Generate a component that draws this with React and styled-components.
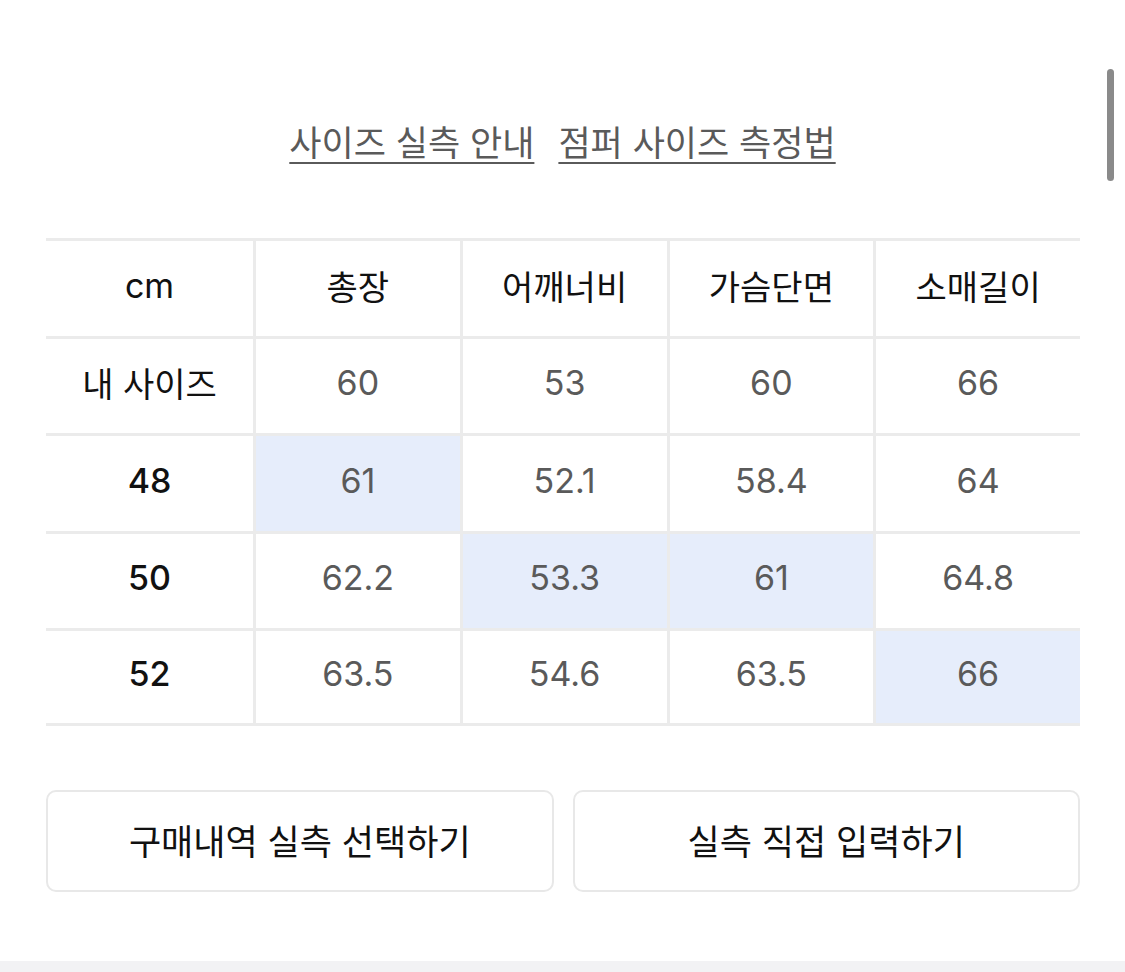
import React from 'react';
import styled, { createGlobalStyle } from 'styled-components';

const GlobalStyle = createGlobalStyle`
    html, body {
        margin: 0;
        padding: 0;
        background: #ffffff;
        font-family: Inter, "Noto Sans CJK KR", sans-serif;
    }
`;

const columns = ['총장', '어깨너비', '가슴단면', '소매길이'];

const rows = [
    { label: '내 사이즈', values: ['60', '53', '60', '66'] },
    { label: '48', values: ['61', '52.1', '58.4', '64'], marked: [0] },
    { label: '50', values: ['62.2', '53.3', '61', '64.8'], marked: [1, 2] },
    { label: '52', values: ['63.5', '54.6', '63.5', '66'], marked: [3] },
];

const App = () => {
    return (
        <Page>
            <GlobalStyle />
            <Links>
                <GuideLink>사이즈 실측 안내</GuideLink>
                <GuideLink>점퍼 사이즈 측정법</GuideLink>
            </Links>
            <Table>
                <Cell first>cm</Cell>
                {columns.map((c) => (
                    <Cell key={c}>{c}</Cell>
                ))}
                {rows.map((row, ri) => (
                    <React.Fragment key={row.label}>
                        <Cell
                            first
                            numeric={!isNaN(row.label)}
                            last={ri === rows.length - 1}
                        >
                            {row.label}
                        </Cell>
                        {row.values.map((v, i) => (
                            <Cell
                                key={i}
                                value
                                last={ri === rows.length - 1}
                                marked={row.marked && row.marked.includes(i)}
                            >
                                {v}
                            </Cell>
                        ))}
                    </React.Fragment>
                ))}
            </Table>
            <Buttons>
                <Button>구매내역 실측 선택하기</Button>
                <Button>실측 직접 입력하기</Button>
            </Buttons>
            <BottomBand />
            <ScrollThumb />
        </Page>
    );
};

export default App;

const Page = styled.div`
    position: relative;
    width: 1125px;
    height: 972px;
    overflow: hidden;
    display: flex;
    flex-direction: column;
    background: #fff;
`;

const Links = styled.div`
    display: flex;
    justify-content: center;
    gap: 24px;
    padding-top: 117px;
`;

const GuideLink = styled.span`
    font-size: 35px;
    line-height: 52px;
    color: #5a5a5a;
    text-decoration: underline;
    text-decoration-thickness: 2px;
    text-underline-offset: 6px;
`;

const Table = styled.div`
    margin: 69px 45px 0 46px;
    display: grid;
    grid-template-columns: 207px repeat(4, 1fr);
    grid-auto-rows: 97.5px;
`;

const Cell = styled.div`
    display: flex;
    align-items: center;
    justify-content: center;
    border-top: 3px solid #ebebeb;
    border-left: ${({ first }) => (first ? 'none' : '3px solid #ebebeb')};
    border-bottom: ${({ last }) => (last ? '3px solid #ebebeb' : 'none')};
    background: ${({ marked }) => (marked ? '#e6edfb' : '#ffffff')};
    font-size: 34px;
    color: ${({ value }) => (value ? '#5a5a5a' : '#111111')};
    font-weight: ${({ numeric }) => (numeric ? 500 : 400)};
    padding-bottom: 6px;
    box-sizing: border-box;
`;

const Buttons = styled.div`
    display: grid;
    grid-template-columns: 1fr 1fr;
    gap: 19px;
    margin: 64px 45px 0 46px;
`;

const Button = styled.button`
    height: 102px;
    border: 2px solid #e8e8e8;
    border-radius: 10px;
    background: #fff;
    font-family: Inter, "Noto Sans CJK KR", sans-serif;
    font-size: 35px;
    font-weight: 400;
    color: #111;
    padding-bottom: 4px;
    cursor: pointer;
`;

const BottomBand = styled.div`
    margin-top: auto;
    height: 11px;
    background: #f2f2f4;
`;

const ScrollThumb = styled.div`
    position: absolute;
    right: 11px;
    top: 69px;
    width: 7px;
    height: 112px;
    border-radius: 4px;
    background: #8a8a8a;
`;
